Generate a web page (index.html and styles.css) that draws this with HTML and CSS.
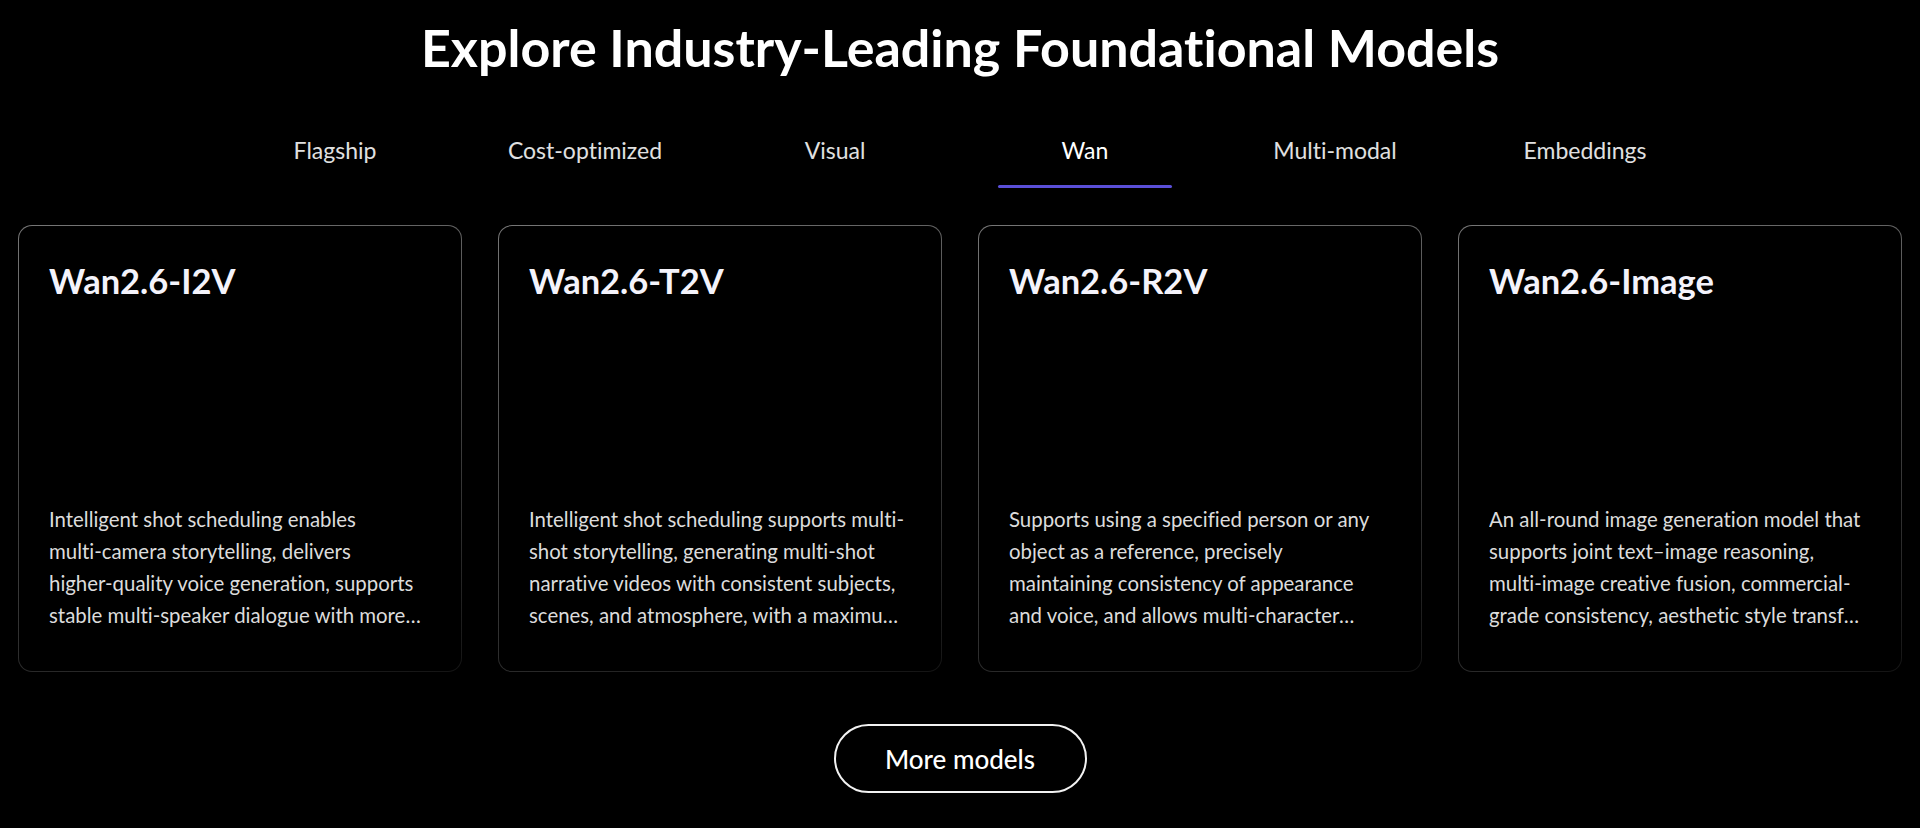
FILE: index.html
```html
<!DOCTYPE html>
<html lang="en">
<head>
<meta charset="utf-8">
<title>Explore Industry-Leading Foundational Models</title>
<link rel="stylesheet" href="styles.css">
</head>
<body>
<section class="models">
  <h1 class="models-title">Explore Industry-Leading Foundational Models</h1>
  <nav class="tabs">
    <a class="tab">Flagship</a>
    <a class="tab">Cost-optimized</a>
    <a class="tab">Visual</a>
    <a class="tab tab-active">Wan</a>
    <a class="tab">Multi-modal</a>
    <a class="tab">Embeddings</a>
  </nav>
  <div class="cards">
    <article class="card">
      <h2 class="card-title">Wan2.6-I2V</h2>
      <p class="card-desc">Intelligent shot scheduling enables <span class="nowrap">multi-camera</span> storytelling, delivers <span class="nowrap">higher-quality</span> voice generation, supports stable <span class="nowrap">multi-speaker</span> dialogue with more natural and realistic audio, and produces videos up to 15 seconds long.</p>
    </article>
    <article class="card">
      <h2 class="card-title">Wan2.6-T2V</h2>
      <p class="card-desc">Intelligent shot scheduling supports multi-shot storytelling, generating multi-shot narrative videos with consistent subjects, scenes, and atmosphere, with a maximum duration of 15 seconds.</p>
    </article>
    <article class="card">
      <h2 class="card-title">Wan2.6-R2V</h2>
      <p class="card-desc">Supports using a specified person or any object as a reference, precisely maintaining consistency of appearance and voice, and allows multi-character interactions in a single video.</p>
    </article>
    <article class="card">
      <h2 class="card-title">Wan2.6-Image</h2>
      <p class="card-desc">An all-round image generation model that supports joint text–image reasoning, multi-image creative fusion, commercial-grade consistency, aesthetic style transfer and precise control.</p>
    </article>
  </div>
  <div class="more">
    <a class="more-btn">More models</a>
  </div>
</section>
</body>
</html>
```
FILE: styles.css
```css
* { box-sizing: border-box; }
html, body {
  margin: 0;
  padding: 0;
  background: #000;
  color: #fff;
  font-family: Lato, "Noto Sans", "Liberation Sans", sans-serif;
  font-variant-ligatures: no-common-ligatures;
}
.models {
  padding: 15px 18px 0;
}
.models-title {
  margin: 0;
  text-align: center;
  font-size: 52px;
  line-height: 64px;
  font-weight: 700;
  color: #fff;
}
.tabs {
  display: flex;
  justify-content: center;
  margin-top: 57px;
}
.tab {
  position: relative;
  width: 250px;
  text-align: center;
  font-size: 23px;
  line-height: 28px;
  color: #e0e0e0;
  padding-bottom: 24px;
  cursor: pointer;
}
.tab-active { color: #fff; }
.tab-active::after {
  content: "";
  position: absolute;
  left: 50%;
  bottom: 0;
  width: 174px;
  height: 3px;
  margin-left: -87px;
  background: #5a4fd8;
  border-radius: 2px;
}
.cards {
  display: grid;
  grid-template-columns: repeat(4, 1fr);
  gap: 36px;
  margin-top: 37px;
}
.card {
  height: 447px;
  display: flex;
  flex-direction: column;
  justify-content: space-between;
  padding: 34px 33px 40px 30px;
  border: 1.5px solid transparent;
  border-radius: 14px;
  background:
    linear-gradient(#000, #000) padding-box,
    linear-gradient(165deg, #767676 0%, #4a4a4a 45%, #2e2e2e 75%, #141414 100%) border-box;
}
.card-title {
  margin: 0;
  font-size: 34.5px;
  line-height: 1.2;
  font-weight: 700;
  color: #f4f3fb;
}
.card-desc {
  margin: 0;
  font-size: 20.4px;
  line-height: 32px;
  color: #dcdcdc;
  display: -webkit-box;
  -webkit-line-clamp: 4;
  -webkit-box-orient: vertical;
  overflow: hidden;
}
.nowrap { white-space: nowrap; }
.more {
  display: flex;
  justify-content: center;
  margin-top: 52px;
}
.more-btn {
  display: flex;
  align-items: center;
  justify-content: center;
  width: 253px;
  height: 69px;
  border: 2px solid #f2f2f2;
  border-radius: 35px;
  font-size: 26px;
  font-weight: 500;
  color: #fff;
  cursor: pointer;
}
```
